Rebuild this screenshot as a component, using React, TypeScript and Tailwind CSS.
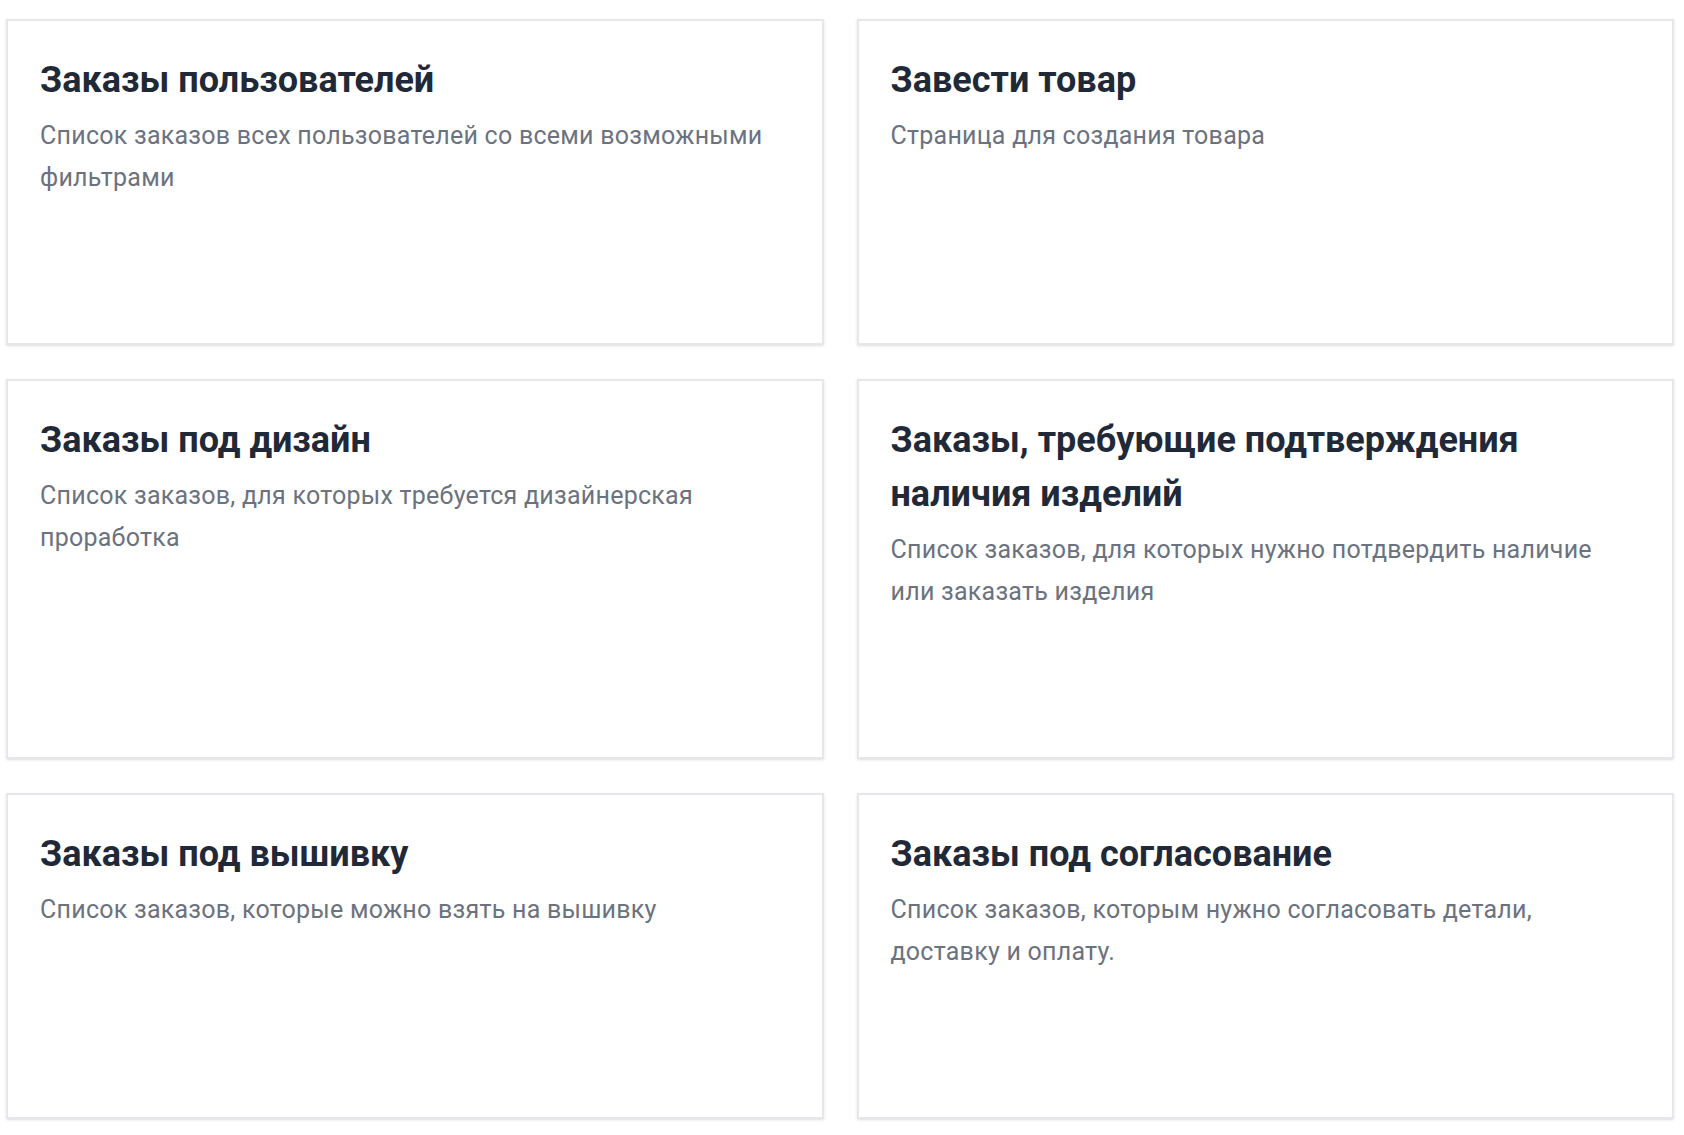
import React from "react";

type Card = {
  title: string;
  text: string;
};

const cards: Card[] = [
  {
    title: "Заказы пользователей",
    text: "Список заказов всех пользователей со всеми возможными фильтрами",
  },
  { title: "Завести товар", text: "Страница для создания товара" },
  {
    title: "Заказы под дизайн",
    text: "Список заказов, для которых требуется дизайнерская проработка",
  },
  {
    title: "Заказы, требующие подтверждения наличия изделий",
    text: "Список заказов, для которых нужно потдвердить наличие или заказать изделия",
  },
  {
    title: "Заказы под вышивку",
    text: "Список заказов, которые можно взять на вышивку",
  },
  {
    title: "Заказы под согласование",
    text: "Список заказов, которым нужно согласовать детали, доставку и оплату.",
  },
];

export default function App() {
  return (
    <div
      className="min-h-screen bg-white pt-[19px] pl-[6px] pr-[10px] pb-[15px]"
      style={{ fontFamily: "Roboto, 'Noto Sans', sans-serif" }}
    >
      <div className="grid grid-cols-2 gap-x-[33px] gap-y-[34px]">
        {cards.map((card) => (
          <a
            key={card.title}
            href="#"
            className="block border-2 border-[#e5e7eb] bg-white px-8 pt-8 pb-[144px] shadow-sm"
          >
            <h2 className="text-[36px] leading-[54px] font-bold text-[#1f2937]">
              {card.title}
            </h2>
            <p className="mt-2 text-[25px] leading-[42px] tracking-[0.01em] text-[#6b7280]">
              {card.text}
            </p>
          </a>
        ))}
      </div>
    </div>
  );
}
